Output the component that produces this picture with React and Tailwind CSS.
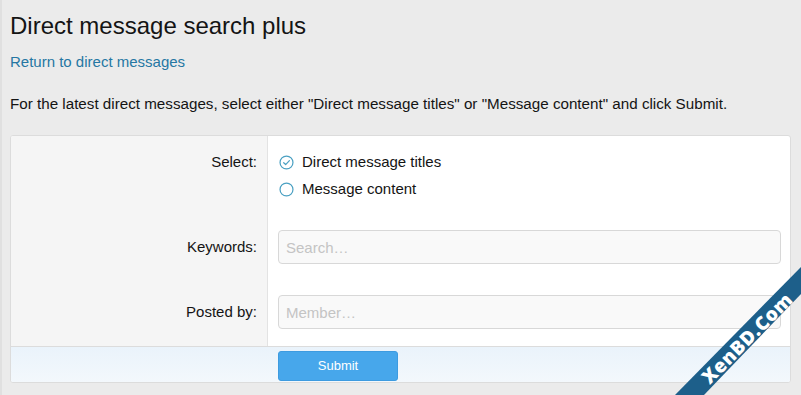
import { useState } from 'react';

function RadioIcon({ checked }) {
  return (
    <svg width="15" height="15" viewBox="0 0 16 16" className="shrink-0">
      <circle cx="8" cy="8" r="6.9" fill="none" stroke="#4aa0c2" strokeWidth="1.3" />
      {checked && (
        <path d="M5 8.2 L7.1 10.2 L11.1 6" fill="none" stroke="#4aa0c2" strokeWidth="1.3" strokeLinecap="round" strokeLinejoin="round" />
      )}
    </svg>
  );
}

function Row({ label, children, className = '', labelClass = '' }) {
  return (
    <div className={`flex ${className}`}>
      <div className={`w-[257px] shrink-0 bg-[#f5f5f5] border-r border-[#e3e3e3] pr-[10px] text-right text-[15px] leading-[18px] text-[#141414] ${labelClass}`}>
        {label}
      </div>
      <div className="flex-1 pl-[10px] pr-[9px]">{children}</div>
    </div>
  );
}

const inputCls =
  'block w-full h-[34px] px-[7px] bg-[#f9f9f9] border border-[#d8d8d8] rounded-[4px] text-[15px] placeholder:text-[#c4c4c4] outline-none';

export default function App() {
  const [mode, setMode] = useState('titles');

  return (
    <div
      className="relative w-[801px] h-[395px] overflow-hidden bg-[#ebebeb] border-l-2 border-[#e0e0e0] text-[#141414]"
      style={{ fontFamily: '"Liberation Sans", Arial, sans-serif' }}
    >
      <div className="pl-[8px] pr-[8px] pt-[12px]">
        <h1 className="text-[24px] leading-[28px] font-normal text-[#141414]">Direct message search plus</h1>
        <a href="#" className="block mt-[13px] text-[15px] leading-[18px] text-[#2577a3]">
          Return to direct messages
        </a>
        <p className="mt-[24px] text-[15.2px] leading-[18px]">
          For the latest direct messages, select either "Direct message titles" or "Message content" and click Submit.
        </p>

        <form
          className="mt-[22px] w-[781px] border border-[#dcdcdc] rounded-[3px] overflow-hidden bg-white"
          onSubmit={(e) => e.preventDefault()}
        >
          <Row label="Select:" labelClass="pt-[17px]">
            <div className="pt-[17px] pb-[16px] flex flex-col gap-[9px] text-[15px] leading-[18px]">
              <label className="flex items-center gap-[8px] pl-[1px] cursor-pointer" onClick={() => setMode('titles')}>
                <RadioIcon checked={mode === 'titles'} />
                <span>Direct message titles</span>
              </label>
              <label className="flex items-center gap-[8px] pl-[1px] cursor-pointer" onClick={() => setMode('content')}>
                <RadioIcon checked={mode === 'content'} />
                <span>Message content</span>
              </label>
            </div>
          </Row>
          <Row label="Keywords:" labelClass="flex items-center justify-end pt-[16px] pb-[15px]">
            <div className="pt-[16px] pb-[15px]">
              <input placeholder="Search…" className={inputCls} />
            </div>
          </Row>
          <Row label="Posted by:" labelClass="flex items-center justify-end pt-[16px] pb-[17px]">
            <div className="pt-[16px] pb-[17px]">
              <input placeholder="Member…" className={inputCls} />
            </div>
          </Row>
          <div className="flex border-t border-[#dcdcdc] bg-gradient-to-b from-[#eaf3fb] to-[#f3f8fc] pt-[4px] pb-[1px]">
            <div className="w-[257px] shrink-0" />
            <div className="pl-[10px]">
              <button
                type="submit"
                className="w-[120px] h-[30px] rounded-[3px] bg-[#47a7eb] border border-[#3d9be0] text-white text-[13px]"
              >
                Submit
              </button>
            </div>
          </div>
        </form>
      </div>

      {/* watermark ribbon */}
      <svg className="absolute right-0 bottom-0" width="130" height="130" viewBox="0 0 130 130">
        <polygon points="130,2 130,29 33,130 4,130" fill="#1d5f8a" />
        <text
          x="0"
          y="0"
          transform="translate(76 73) rotate(-45)"
          textAnchor="middle"
          dominantBaseline="central"
          fill="white"
          fontSize="19"
          fontWeight="800"
          fontFamily='"Open Sans", sans-serif'
          letterSpacing="0.6"
        >
          XenBD.Com
        </text>
      </svg>
    </div>
  );
}
